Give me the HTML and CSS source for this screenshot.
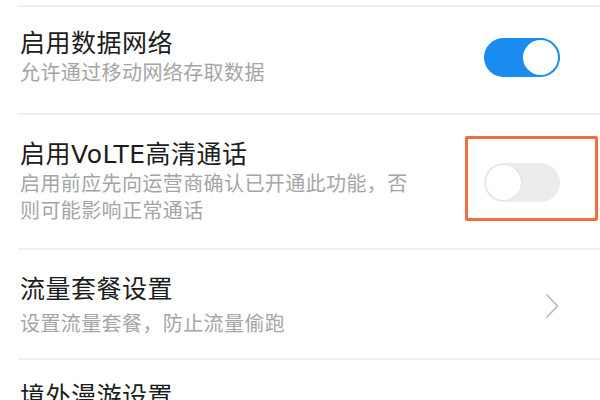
FILE: index.html
```html
<!DOCTYPE html>
<html lang="zh-CN">
<head>
  <meta charset="UTF-8">
  <meta name="viewport" content="width=device-width, initial-scale=1.0">
  <title>移动网络设置</title>
  <link rel="stylesheet" href="styles.css">
</head>
<body>
  <div class="settings">
    <!-- 数据网络 -->
    <div class="row row-data">
      <div class="text">
        <div class="title">启用数据网络</div>
        <div class="desc">允许通过移动网络存取数据</div>
      </div>
      <div class="switch on"><span class="knob"></span></div>
    </div>

    <!-- VoLTE -->
    <div class="row row-volte">
      <div class="text">
        <div class="title">启用VoLTE高清通话</div>
        <div class="desc">启用前应先向运营商确认已开通此功能，否则可能影响正常通话</div>
      </div>
      <div class="switch"><span class="knob"></span></div>
      <div class="mark"></div>
    </div>

    <!-- 流量套餐 -->
    <div class="row row-plan">
      <div class="text">
        <div class="title">流量套餐设置</div>
        <div class="desc">设置流量套餐，防止流量偷跑</div>
      </div>
      <svg class="chevron" width="14" height="26" viewBox="0 0 14 26">
        <polyline points="1.5,1.5 12.5,13 1.5,24.5" fill="none" stroke="#b8b8b8" stroke-width="1.6"/>
      </svg>
    </div>

    <!-- 漫游 -->
    <div class="row row-roam">
      <div class="text">
        <div class="title">境外漫游设置</div>
      </div>
    </div>
  </div>
</body>
</html>
```

FILE: styles.css
```css
/* General */
body {
  margin: 0;
  background-color: #fff;
  font-family: "DejaVu Sans", "Noto Sans CJK SC", sans-serif;
  overflow: hidden;
}

.settings {
  padding-top: 5px;
}

/* Rows */
.row {
  position: relative;
  display: flex;
  align-items: center;
  justify-content: space-between;
  margin-left: 18px;
  padding: 21px 40px 26px 2px;
  border-top: 2px solid #efefef;
}

.row-volte {
  padding-top: 24px;
  padding-bottom: 23px;
}

.row-plan {
  padding-top: 24px;
  padding-bottom: 20px;
}

.row-plan .desc {
  margin-top: 5px;
}

.row-roam {
  padding-top: 21px;
}

.text {
  max-width: 400px;
}

.title {
  font-size: 25px;
  line-height: 32px;
  letter-spacing: 0.5px;
  color: #1c1c1c;
}

.desc {
  font-size: 20px;
  line-height: 27px;
  letter-spacing: 0.4px;
  color: #a5a5a5;
}

/* Switches */
.switch {
  position: relative;
  flex-shrink: 0;
  width: 76px;
  height: 39px;
  border-radius: 20px;
  background-color: #ececec;
}

.switch .knob {
  position: absolute;
  top: 2px;
  left: 2px;
  width: 35px;
  height: 35px;
  border-radius: 50%;
  background-color: #fff;
  box-shadow: 0 0 0 1px #e2e2e2;
}

.switch.on {
  background-color: #1a8cf0;
}

.switch.on .knob {
  left: auto;
  right: 2px;
  box-shadow: none;
}

.chevron {
  flex-shrink: 0;
  margin-right: 1px;
}

/* Highlight box drawn over the VoLTE switch */
.mark {
  position: absolute;
  top: 21px;
  right: 2px;
  width: 127px;
  height: 79px;
  border: 3px solid #f26d3d;
  border-radius: 2px;
}
```
